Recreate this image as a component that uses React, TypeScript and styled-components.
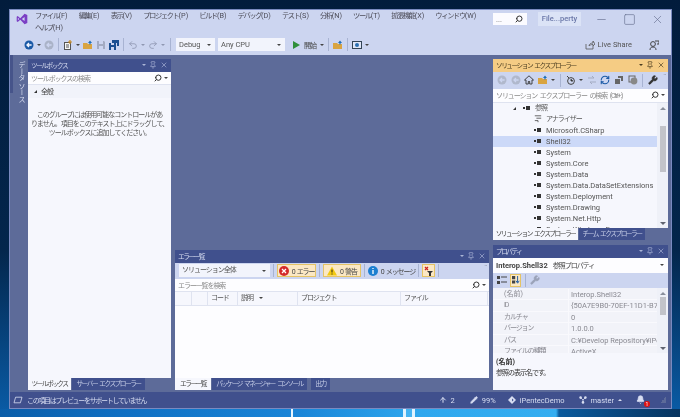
import React from 'react'
import styled, { createGlobalStyle, css } from 'styled-components'
import { ArrowUp, Bell, Minus, Pencil, Pin, Redo2, RefreshCw, Search, Square, Undo2, Wrench, X } from 'lucide-react'

const GlobalStyle = createGlobalStyle`
  html, body { margin: 0; padding: 0; }
  body { font-family: Roboto, "Noto Sans CJK JP", sans-serif; font-size: 7.5px; color: #444; }
  * { box-sizing: border-box; }
`

// the reference's Japanese UI font is much narrower than Noto CJK
const jpNarrow = css`
  font-size: 6.7px;
  letter-spacing: -1.5px;
  word-spacing: 2px;
`

const jpText = css`
  font-size: 7px;
  letter-spacing: -1px;
  word-spacing: 1.5px;
`

const Desktop = styled.div`
  width: 680px;
  height: 417px;
  overflow: hidden;
  padding: 9px 8px 8px 9px;
  background-image:
    linear-gradient(90deg, transparent 0 291px, #e8f6ff 291px 293px, transparent 293px 403px, #dff3ff 403px 406px, #45b4f2 406px 412px, #dff3ff 412px 415px, transparent 415px),
    linear-gradient(90deg, #0a5da8 0, #0f6fc2 120px, #1a86d8 300px, #2fa8ee 420px, #35aef0 556px, #0a5a9c 559px, #07345f 680px),
    linear-gradient(180deg, #021c3c 0, #03264c 60%, #0a5da8 100%);
  background-size: 100% 8px, 100% 8px, 100% 100%;
  background-position: bottom, bottom, top;
  background-repeat: no-repeat;
`

const Window = styled.div`
  width: 663px;
  height: 400px;
  display: flex;
  flex-direction: column;
  background: #5d6b99;
  border: 1px solid #7a8ac0;
  filter: blur(0.25px);
`

const Head = styled.header`
  height: 45px;
  background: #ccd5f0;
  display: flex;
  flex-direction: column;
  flex: none;
`

const TopRow = styled.div`
  height: 26px;
  display: flex;
  align-items: flex-start;
`

const Logo = styled.svg`
  width: 12px;
  height: 12px;
  margin: 3px 7px 0 6px;
  flex: none;
`

const Menu = styled.nav`
  font-size: 7.3px;
  letter-spacing: -1.4px;
  width: 454px;
  display: flex;
  flex-wrap: wrap;
  column-gap: 11px;
  row-gap: 1px;
  padding-top: 1px;
  line-height: 10.5px;
  color: #4c4c58;
`

const MenuKey = styled.span`
  letter-spacing: 0;
`

const QuickSearch = styled.div`
  width: 34px;
  height: 12px;
  margin: 3px 0 0 4px;
  background: #fbfbff;
  display: flex;
  align-items: center;
  justify-content: space-between;
  padding: 0 4px 0 3px;
  color: #777;
`

const SolutionName = styled.div`
  width: 43px;
  height: 14px;
  margin: 2px 0 0 11px;
  background: #dbe3f6;
  color: #6a77a8;
  font-weight: 500;
  text-align: center;
  line-height: 14px;
  white-space: nowrap;
`

const WindowButtons = styled.div`
  margin: 3px 0 0 14px;
  display: flex;
  gap: 15px;
  color: #66708f;
  svg { width: 13px; height: 13px; stroke-width: 1.2; display: block; }
`

const MainBar = styled.div`
  height: 17px;
  padding-left: 6px;
  display: flex;
  align-items: center;
  gap: 3px;
`

const Grip = styled.div`
  width: 4px;
  height: 11px;
  margin-right: 1px;
  background-image: radial-gradient(#8a93ad 0.6px, transparent 0.7px);
  background-size: 2px 2px;
`

const Sep = styled.div<{ $m?: number }>`
  width: 1px;
  height: 13px;
  margin: 0 ${(p) => p.$m ?? 1}px;
  background: #a8b3d2;
  flex: none;
`

const Caret = styled.span<{ $c?: string }>`
  display: inline-block;
  flex: none;
  width: 0;
  height: 0;
  border-left: 2px solid transparent;
  border-right: 2px solid transparent;
  border-top: 2px solid ${(p) => p.$c || '#444'};
`

const Combo = styled.div<{ $w: number; $jp?: boolean }>`
  ${(p) => p.$jp && jpText}
  width: ${(p) => p.$w}px;
  height: 13px;
  flex: none;
  padding: 0 4px 0 3px;
  background: #f2f4fc;
  display: flex;
  align-items: center;
  justify-content: space-between;
  color: #555;
  line-height: 13px;
`

const IconSvg = styled.svg`
  width: 10px;
  height: 10px;
  flex: none;
  display: block;
`

const Spring = styled.div`
  flex: 1;
`

const StartLabel = styled.span`
  ${jpText}
  width: 13px;
  white-space: nowrap;
`

const PlayIcon = styled(IconSvg)`
  margin-left: 3px;
`

const LiveShare = styled.div`
  display: flex;
  align-items: center;
  gap: 3px;
  margin-right: 14px;
  color: #555;
  svg { width: 10px; height: 10px; }
`

const PersonIcon = styled(IconSvg)`
  margin-right: 12px;
`

const Body = styled.main`
  flex: 1;
  min-height: 0;
  display: flex;
  padding: 4px 3px 0 0;
`

const SideTab = styled.div`
  ${jpText}
  letter-spacing: -0.6px;
  width: 18px;
  height: 38px;
  flex: none;
  margin-top: -4px;
  padding-top: 6px;
  border-left: 3px solid #46548a;
  color: #d6dcf0;
  writing-mode: vertical-rl;
  line-height: 14px;
  white-space: nowrap;
`

const ToolboxColumn = styled.section`
  width: 143px;
  flex: none;
  display: flex;
  flex-direction: column;
  padding-bottom: 1px;
`

const Center = styled.section`
  width: 314px;
  flex: none;
  margin: 0 4px;
  display: flex;
  flex-direction: column;
  justify-content: flex-end;
  padding-bottom: 1px;
`

const RightColumn = styled.section`
  width: 175px;
  flex: none;
  display: flex;
  flex-direction: column;
  gap: 5px;
  padding-bottom: 1px;
`

const PanelHead = styled.div<{ $active?: boolean }>`
  ${jpNarrow}
  height: 12.5px;
  flex: none;
  padding: 0 3px 0 3px;
  display: flex;
  align-items: center;
  justify-content: space-between;
  background: ${(p) => (p.$active ? '#f5cc84' : '#40508d')};
  color: ${(p) => (p.$active ? '#4a3c20' : '#d8def2')};
`

const HeadTools = styled.div<{ $active?: boolean }>`
  display: flex;
  align-items: center;
  gap: 3px;
  color: ${(p) => (p.$active ? '#4a3c20' : '#aab4d6')};
  svg { width: 8px; height: 8px; }
`

const Bar = styled.div<{ $h: number; $gap?: number }>`
  height: ${(p) => p.$h}px;
  flex: none;
  background: #ccd5f0;
  display: flex;
  align-items: center;
  gap: ${(p) => p.$gap ?? 3}px;
  padding: 0 4px;
  position: relative;
`

const Overflow = styled.span`
  position: absolute;
  top: 1px;
  right: 2px;
  color: #555;
  font-size: 6px;
  line-height: 6px;
`

const SearchBox = styled.div<{ $h: number }>`
  ${jpText}
  letter-spacing: -1.1px;
  word-spacing: 2px;
  height: ${(p) => p.$h}px;
  flex: none;
  padding: 0 3px;
  background: #fdfdff;
  border-bottom: 1px solid #dfe3f0;
  display: flex;
  align-items: center;
  justify-content: space-between;
  color: #8a8a8a;
  white-space: nowrap;
`

const SearchEnd = styled.div`
  display: flex;
  align-items: center;
  gap: 2px;
  svg { width: 8px; height: 8px; color: #333; transform: scaleX(-1); stroke-width: 3; }
`

const QuickSearchIcon = styled(Search)`
  width: 8px;
  height: 8px;
  color: #333;
  stroke-width: 3;
  transform: scaleX(-1);
`

const ToolboxBody = styled.div`
  flex: 1;
  background: #f6f7fd;
  color: #555;
`

const GroupRow = styled.div`
  ${jpText}
  height: 13px;
  padding-left: 6px;
  display: flex;
  align-items: center;
  gap: 4px;
  background: #f1f3fa;
  color: #444;
`

const Expander = styled.span`
  display: inline-block;
  width: 0;
  height: 0;
  flex: none;
  border-left: 3px solid transparent;
  border-bottom: 3px solid #333;
`

const TreeExpander = styled(Expander)`
  margin-right: 3px;
`

const EmptyNote = styled.p`
  ${jpText}
  margin: 13px 0 0;
  text-align: center;
  line-height: 9.2px;
  white-space: nowrap;
`

const TabStrip = styled.div`
  height: 12.5px;
  flex: none;
  display: flex;
  gap: 1px;
`

const Tab = styled.div<{ $active?: boolean; $w: number; $ml?: number }>`
  ${jpNarrow}
  width: ${(p) => p.$w}px;
  margin-left: ${(p) => p.$ml || 0}px;
  flex: none;
  text-align: center;
  line-height: 12px;
  white-space: nowrap;
  background: ${(p) => (p.$active ? '#f6f7fd' : '#40508d')};
  color: ${(p) => (p.$active ? '#444' : '#c6cee8')};
`

const ErrorPanel = styled.div`
  height: 140px;
  flex: none;
  display: flex;
  flex-direction: column;
`

const FilterButton = styled.div<{ $on?: boolean; $w: number }>`
  ${jpText}
  letter-spacing: -1.1px;
  width: ${(p) => p.$w}px;
  height: 13px;
  flex: none;
  display: flex;
  align-items: center;
  justify-content: center;
  gap: 3px;
  color: #444;
  white-space: nowrap;
  background: ${(p) => (p.$on ? '#fbe8c4' : 'transparent')};
  border: 1px solid ${(p) => (p.$on ? '#e5c365' : 'transparent')};
`

const Columns = styled.div`
  height: 14px;
  flex: none;
  display: flex;
  background: #f6f7fd;
  border-bottom: 1px solid #dfe3f0;
`

const Col = styled.div<{ $w: number }>`
  ${jpText}
  letter-spacing: -1.1px;
  width: ${(p) => p.$w}px;
  flex: none;
  padding-left: 3px;
  border-right: 1px solid #dfe3f0;
  line-height: 14px;
  color: #555;
  display: flex;
  align-items: center;
  gap: 6px;
`

const ErrorBody = styled.div`
  flex: 1;
  background: #fdfdff;
`

const ExplorerPanel = styled.div`
  height: 181px;
  flex: none;
  display: flex;
  flex-direction: column;
`

const TreeArea = styled.div`
  height: 125px;
  flex: none;
  display: flex;
  background: #f6f7fd;
  overflow: hidden;
`

const TreeList = styled.div`
  flex: 1;
`

const TreeRow = styled.div<{ $sel?: boolean; $indent: number }>`
  height: 11px;
  padding-left: ${(p) => p.$indent}px;
  display: flex;
  align-items: center;
  gap: 4px;
  white-space: nowrap;
  line-height: 11px;
  color: #555;
  background: ${(p) => (p.$sel ? '#ccd9f8' : 'transparent')};
`

const TreeJp = styled.span`
  ${jpText}
`

const RefGlyph = styled.span`
  width: 8px;
  height: 5px;
  flex: none;
  display: flex;
  align-items: center;
  gap: 1px;
  &::before { content: ''; width: 2px; height: 2px; background: #333; }
  &::after { content: ''; width: 4px; height: 4px; background: #333; }
`

const AnalyzerIcon = styled(IconSvg)`
  width: 8px;
  height: 8px;
`

const Track = styled.div`
  width: 11px;
  flex: none;
  background: #eff1f8;
  display: flex;
  flex-direction: column;
  align-items: center;
`

const Thumb = styled.div<{ $top: number; $h: number }>`
  width: 6px;
  height: ${(p) => p.$h}px;
  margin-top: ${(p) => p.$top}px;
  background: #c2c3c9;
  flex: none;
`

const ArrowUpMark = styled.span`
  margin-top: 4px;
  width: 0;
  height: 0;
  flex: none;
  border-left: 3px solid transparent;
  border-right: 3px solid transparent;
  border-bottom: 3px solid #8a8f9c;
`

const ArrowDownMark = styled(ArrowUpMark)`
  margin: auto 0 3px;
  border-bottom: 0;
  border-top: 3px solid #606470;
`

const PropsPanel = styled.div`
  flex: 1;
  display: flex;
  flex-direction: column;
  min-height: 0;
`

const ObjectCombo = styled.div`
  height: 15px;
  flex: none;
  padding: 0 4px 0 3px;
  background: #fdfdff;
  display: flex;
  align-items: center;
  justify-content: space-between;
  color: #444;
  white-space: pre;
  b { font-size: 7.5px; font-weight: 700; }
  em { ${jpText} font-style: normal; margin-left: 5px; }
`

const PropGrid = styled.div`
  height: 65px;
  flex: none;
  display: flex;
  background: #f2f3f9;
  overflow: hidden;
`

const PropRows = styled.div`
  flex: 1;
  min-width: 0;
  padding-top: 1px;
`

const PropRow = styled.div<{ $plain?: boolean }>`
  height: 11.6px;
  display: grid;
  grid-template-columns: 66px 1fr;
  padding-left: 9px;
  border-bottom: 1px solid #f9f9fd;
  line-height: 11px;
  color: #8a8a92;
  span { padding-left: 2px; white-space: nowrap; overflow: hidden; }
  span:first-child { ${jpText} letter-spacing: ${(p) => (p.$plain ? 0 : -1.1)}px; }
  span + span { border-left: 1px solid #f9f9fd; }
`

const Description = styled.div`
  ${jpText}
  flex: 1;
  background: #f6f7fd;
  padding: 4px 3px;
  line-height: 11px;
  color: #333;
  b { display: block; font-weight: 700; letter-spacing: 0; }
`

const StatusBar = styled.footer`
  height: 16px;
  flex: none;
  margin-top: 1px;
  background: #40508d;
  color: #d8def2;
  display: flex;
  align-items: center;
  padding: 0 5px 0 3px;
  position: relative;
`

const StatusIcon = styled(IconSvg)`
  width: 10px;
  height: 8px;
  margin-right: 4px;
`

const StatusText = styled.span`
  ${jpText}
  letter-spacing: -1.3px;
`

const StatusItem = styled.div<{ $ml?: number }>`
  display: flex;
  align-items: center;
  gap: 4px;
  margin-left: ${(p) => p.$ml || 0}px;
  svg { width: 8px; height: 8px; flex: none; }
`

const UpCaret = styled(Caret)`
  transform: rotate(180deg);
`

const BellWrap = styled.div`
  position: relative;
  margin-left: 14px;
  color: #d8def2;
  width: 10px;
  height: 10px;
  svg { width: 9px; height: 9px; display: block; }
`

const Badge = styled.span`
  position: absolute;
  right: -4px;
  bottom: -2px;
  width: 6px;
  height: 6px;
  border-radius: 50%;
  background: #e01010;
  color: #fff;
  font-size: 5px;
  line-height: 6px;
  text-align: center;
`

const ResizeGrip = styled.div`
  width: 6px;
  height: 6px;
  margin-left: 14px;
  background: linear-gradient(135deg, transparent 50%, #5d6b99 50%);
`

const MENU = ['ファイル(F)', '編集(E)', '表示(V)', 'プロジェクト(P)', 'ビルド(B)', 'デバッグ(D)', 'テスト(S)', '分析(N)', 'ツール(T)', '拡張機能(X)', 'ウィンドウ(W)', 'ヘルプ(H)']

const TREE = ['Microsoft.CSharp', 'Shell32', 'System', 'System.Core', 'System.Data', 'System.Data.DataSetExtensions', 'System.Deployment', 'System.Drawing', 'System.Net.Http', 'System.Windows.Forms']

const PROPS = [
  ['(名前)', 'Interop.Shell32'],
  ['ID', '{50A7E9B0-70EF-11D1-B75A'],
  ['カルチャ', '0'],
  ['バージョン', '1.0.0.0'],
  ['パス', 'C:¥Develop Repository¥iPe'],
  ['ファイルの種類', 'ActiveX'],
]

const CircleArrow = ({ color, fill }: { color: string; fill: string }) => (
  <IconSvg viewBox="0 0 10 10">
    <circle cx="5" cy="5" r="4.5" fill={color} />
    <path d="M7.6 5H3.2M5 3 3 5l2 2" stroke={fill} strokeWidth="1.3" fill="none" />
  </IconSvg>
)

const Folder = () => (
  <IconSvg viewBox="0 0 10 10">
    <path d="M0 3h4l1 1h4v5H0z" fill="#d9a441" />
    <path d="M5 3 7 .5 9 3H7.6v1.4H6.4V3z" fill="#1e6fb8" />
  </IconSvg>
)

const Disk = ({ color }: { color: string }) => (
  <IconSvg viewBox="0 0 10 10">
    <path d="M1 1h7l1 1v7H1z" fill={color} />
    <path d="M3 1h4v3H3zM3 6h4v3H3z" fill="#ccd5f0" />
  </IconSvg>
)

const SaveAll = () => (
  <IconSvg viewBox="0 0 10 10">
    <path d="M3 0h7v6H8V3H3z" fill="#1b4f91" />
    <path d="M0 3h7v7H0z" fill="#1b4f91" />
    <path d="M2 3h3v2H2zM2 7h3v3H2z" fill="#ccd5f0" />
  </IconSvg>
)

const NewProject = () => (
  <IconSvg viewBox="0 0 10 10">
    <rect x="1.5" y="2.5" width="6" height="7" fill="#f7f7f7" stroke="#555" />
    <path d="M7 0v4M5 2h4" stroke="#c78a22" strokeWidth="1.2" />
    <path d="M3 5h3M3 7h3" stroke="#555" />
  </IconSvg>
)

const Search16 = () => (
  <SearchEnd>
    <Search />
    <Caret $c="#444" />
  </SearchEnd>
)

const PaneTools = ({ active }: { active?: boolean }) => (
  <HeadTools $active={active}>
    <Caret $c={active ? '#4a3c20' : '#aab4d6'} />
    <Pin />
    <X />
  </HeadTools>
)

const ScrollBar = ({ top, h }: { top: number; h: number }) => (
  <Track>
    <ArrowUpMark />
    <Thumb $top={top} $h={h} />
    <ArrowDownMark />
  </Track>
)

const App = () => {
  return (
    <Desktop>
      <GlobalStyle />
      <Window>
        <Head>
          <TopRow>
            <Logo viewBox="0 0 14 14">
              <path d="M10 1 5 6 2 3.6 0.8 4.3v5.4L2 10.4 5 8l5 5 3.2-1.4V2.4zM10 4.6v4.8L6.8 7zM2.2 5.6 3.8 7 2.2 8.4z" fill="#7b3fc4" />
            </Logo>
            <Menu>
              {MENU.map((m) => (
                <span key={m}>
                  {m.slice(0, -3)}
                  <MenuKey>{m.slice(-3)}</MenuKey>
                </span>
              ))}
            </Menu>
            <QuickSearch>
              ...
              <QuickSearchIcon />
            </QuickSearch>
            <SolutionName>File...perty</SolutionName>
            <WindowButtons>
              <Minus />
              <Square />
              <X />
            </WindowButtons>
          </TopRow>
          <MainBar>
            <Grip />
            <CircleArrow color="#1b5aa6" fill="#f5f7ff" />
            <Caret />
            <CircleArrow color="#aab3c8" fill="#ccd5f0" />
            <Sep />
            <NewProject />
            <Caret />
            <Folder />
            <Disk color="#a3abc2" />
            <SaveAll />
            <Sep />
            <Undo2 size={10} color="#8f98b2" />
            <Caret $c="#8f98b2" />
            <Redo2 size={10} color="#8f98b2" />
            <Caret $c="#8f98b2" />
            <Sep $m={2} />
            <Combo $w={39}>
              Debug
              <Caret />
            </Combo>
            <Combo $w={67}>
              Any CPU
              <Caret />
            </Combo>
            <PlayIcon viewBox="0 0 10 10">
              <path d="M2 1v8l7-4z" fill="#2f8f3a" />
            </PlayIcon>
            <StartLabel>開始</StartLabel>
            <Caret />
            <Sep />
            <Folder />
            <Sep />
            <IconSvg viewBox="0 0 10 10">
              <rect x="0.5" y="1.5" width="9" height="7" fill="#dfe6f7" stroke="#345" />
              <circle cx="5" cy="5" r="2" fill="#2a6fb0" />
            </IconSvg>
            <Caret />
            <Spring />
            <LiveShare>
              <IconSvg viewBox="0 0 10 10">
                <path d="M1 4v5h7V6M4 6c0-2 2-3 4-3V1l2 3-2 2V4.5C6 4.500 5 5 4 6z" fill="none" stroke="#555" strokeWidth="0.8" />
              </IconSvg>
              Live Share
            </LiveShare>
            <PersonIcon viewBox="0 0 10 10">
              <circle cx="4" cy="4" r="2.400" fill="none" stroke="#444" />
              <path d="M1 10c0-2 1-3 3-3s3 1 3 3M6 1h4v3H8" fill="none" stroke="#444" />
            </PersonIcon>
          </MainBar>
        </Head>
        <Body>
          <SideTab>データ ソース</SideTab>
          <ToolboxColumn>
            <PanelHead>
              ツールボックス
              <PaneTools />
            </PanelHead>
            <SearchBox $h={13}>
              ツールボックスの検索
              <Search16 />
            </SearchBox>
            <ToolboxBody>
              <GroupRow>
                <Expander />
                全般
              </GroupRow>
              <EmptyNote>
                このグループには使用可能なコントロールがあ
                <br />
                りません。項目をこのテキスト上にドラッグして、
                <br />
                ツールボックスに追加してください。
              </EmptyNote>
            </ToolboxBody>
            <TabStrip>
              <Tab $active $w={43}>
                ツールボックス
              </Tab>
              <Tab $w={73}>サーバー エクスプローラー</Tab>
            </TabStrip>
          </ToolboxColumn>
          <Center>
            <ErrorPanel>
              <PanelHead>
                エラー一覧
                <PaneTools />
              </PanelHead>
              <Bar $h={16} $gap={2}>
                <Combo $w={91} $jp>
                  ソリューション全体
                  <Caret />
                </Combo>
                <Sep />
                <FilterButton $on $w={39}>
                  <IconSvg viewBox="0 0 10 10">
                    <circle cx="5" cy="5" r="5" fill="#d42a2a" />
                    <path d="M3 3l4 4M7 3 3 7" stroke="#fff" strokeWidth="1.3" />
                  </IconSvg>
                  0 エラー
                </FilterButton>
                <Sep />
                <FilterButton $on $w={38}>
                  <IconSvg viewBox="0 0 10 10">
                    <path d="M5 .5 10 9.500H0z" fill="#f2c811" />
                    <path d="M5 3.500v3M5 7.500v1" stroke="#222" />
                  </IconSvg>
                  0 警告
                </FilterButton>
                <Sep />
                <FilterButton $w={47}>
                  <IconSvg viewBox="0 0 10 10">
                    <circle cx="5" cy="5" r="5" fill="#1c7fd0" />
                    <path d="M5 4v4M5 2v1" stroke="#fff" strokeWidth="1.300" />
                  </IconSvg>
                  0 メッセージ
                </FilterButton>
                <Sep />
                <FilterButton $on $w={13}>
                  <IconSvg viewBox="0 0 10 10">
                    <path d="M1 1l3 3M4 1 1 4" stroke="#c22" strokeWidth="1.2" />
                    <path d="M3 5h6L7 7v3H5V7z" fill="#333" />
                  </IconSvg>
                </FilterButton>
                <Sep />
                <Overflow>¨</Overflow>
              </Bar>
              <SearchBox $h={13}>
                エラー一覧を検索
                <Search16 />
              </SearchBox>
              <Columns>
                <Col $w={17} />
                <Col $w={16} />
                <Col $w={30}>コード</Col>
                <Col $w={60}>
                  説明
                  <Caret />
                </Col>
                <Col $w={103}>プロジェクト</Col>
                <Col $w={87}>ファイル</Col>
              </Columns>
              <ErrorBody />
              <TabStrip>
                <Tab $active $w={36}>
                  エラー一覧
                </Tab>
                <Tab $w={95}>パッケージ マネージャー コンソール</Tab>
                <Tab $w={19} $ml={3}>
                  出力
                </Tab>
              </TabStrip>
            </ErrorPanel>
          </Center>
          <RightColumn>
            <ExplorerPanel>
              <PanelHead $active>
                ソリューション エクスプローラー
                <PaneTools active />
              </PanelHead>
              <Bar $h={17} $gap={3.6}>
                <CircleArrow color="#b0b8cc" fill="#ccd5f0" />
                <CircleArrow color="#b0b8cc" fill="#ccd5f0" />
                <IconSvg viewBox="0 0 10 10">
                  <path d="M5 .8 .5 5H2v4h2.300V6.500h1.400V9H8V5h1.500z" fill="none" stroke="#333" strokeWidth="0.9" />
                </IconSvg>
                <Folder />
                <Caret />
                <Sep />
                <IconSvg viewBox="0 0 10 10">
                  <circle cx="5" cy="6" r="3.400" fill="none" stroke="#444" />
                  <path d="M5 4v2h2M1 1l2 2" stroke="#444" />
                </IconSvg>
                <Caret />
                <IconSvg viewBox="0 0 10 10">
                  <path d="M1 3h6M5 1l2 2M9 7H3M5 9 3 7" stroke="#a3abc2" fill="none" />
                </IconSvg>
                <RefreshCw size={10} color="#1b5aa6" strokeWidth={2.600} />
                <IconSvg viewBox="0 0 10 10">
                  <path d="M4 1h5v5H7V3H4zM1 4h5v5H1z" fill="#666" />
                </IconSvg>
                <IconSvg viewBox="0 0 10 10">
                  <rect x="1" y="1" width="6" height="6" fill="none" stroke="#666" />
                  <circle cx="6" cy="6" r="3.400" fill="#888" />
                </IconSvg>
                <Sep />
                <Wrench size={10} color="#333" fill="#333" />
                <Overflow>¨</Overflow>
              </Bar>
              <SearchBox $h={14}>
                ソリューション エクスプローラー の検索 (Ctrl+:)
                <Search16 />
              </SearchBox>
              <TreeArea>
                <TreeList>
                  <TreeRow $indent={20}>
                    <TreeExpander />
                    <RefGlyph />
                    <TreeJp>参照</TreeJp>
                  </TreeRow>
                  <TreeRow $indent={41}>
                    <AnalyzerIcon viewBox="0 0 10 10">
                      <path d="M1 1h8M3 4h6M1 7h4v2" stroke="#444" fill="none" />
                    </AnalyzerIcon>
                    <TreeJp>アナライザー</TreeJp>
                  </TreeRow>
                  {TREE.map((t) => (
                    <TreeRow key={t} $indent={41} $sel={t === 'Shell32'}>
                      <RefGlyph />
                      {t}
                    </TreeRow>
                  ))}
                </TreeList>
                <ScrollBar top={16} h={46} />
              </TreeArea>
              <TabStrip>
                <Tab $active $w={85}>
                  ソリューション エクスプローラー
                </Tab>
                <Tab $w={66}>チーム エクスプローラー</Tab>
              </TabStrip>
            </ExplorerPanel>
            <PropsPanel>
              <PanelHead>
                プロパティ
                <PaneTools />
              </PanelHead>
              <ObjectCombo>
                <span>
                  <b>Interop.Shell32</b>
                  <em>参照プロパティ</em>
                </span>
                <Caret />
              </ObjectCombo>
              <Bar $h={15}>
                <IconSvg viewBox="0 0 10 10">
                  <path d="M0 1h3v3H0zM0 6h3v3H0z" fill="#444" />
                  <path d="M4 2h6M4 7h6" stroke="#444" />
                </IconSvg>
                <FilterButton $on $w={11}>
                  <AnalyzerIcon viewBox="0 0 10 10">
                    <path d="M0 0h4v4H0zM0 5.500h4v4H0z" fill="#444" />
                    <path d="M7 0v8M5 6l2 3 2-3" stroke="#1b5aa6" fill="none" strokeWidth="1.200" />
                  </AnalyzerIcon>
                </FilterButton>
                <Sep />
                <Wrench size={10} color="#9aa2b8" fill="#9aa2b8" />
              </Bar>
              <PropGrid>
                <PropRows>
                  {PROPS.map(([k, v]) => (
                    <PropRow key={k} $plain={k === '(名前)'}>
                      <span>{k}</span>
                      <span>{v}</span>
                    </PropRow>
                  ))}
                </PropRows>
                <ScrollBar top={2} h={18} />
              </PropGrid>
              <Description>
                <b>(名前)</b>
                参照の表示名です。
              </Description>
            </PropsPanel>
          </RightColumn>
        </Body>
        <StatusBar>
          <StatusIcon viewBox="0 0 10 10">
            <path d="M2 1.500h8L8 8.500H0z" fill="none" stroke="#d8def2" />
          </StatusIcon>
          <StatusText>この項目はプレビューをサポートしていません</StatusText>
          <Spring />
          <StatusItem>
            <ArrowUp strokeWidth={3} />2
          </StatusItem>
          <StatusItem $ml={15}>
            <Pencil fill="#d8def2" />
            99%
          </StatusItem>
          <StatusItem $ml={12}>
            <IconSvg viewBox="0 0 10 10">
              <path d="M5 0l5 5-5 5-5-5z" fill="#d8def2" />
              <path d="M5 3l2 2-2 2z" fill="#40508d" />
            </IconSvg>
            iPentecDemo
          </StatusItem>
          <StatusItem $ml={14}>
            <IconSvg viewBox="0 0 10 10">
              <circle cx="2" cy="2" r="1.600" fill="#d8def2" />
              <circle cx="8" cy="2" r="1.600" fill="#d8def2" />
              <circle cx="5" cy="8" r="1.600" fill="#d8def2" />
              <path d="M2 2l3 3 3-3M5 5v3" stroke="#d8def2" fill="none" />
            </IconSvg>
            master
            <UpCaret $c="#d8def2" />
          </StatusItem>
          <BellWrap>
            <Bell fill="#d8def2" />
            <Badge>1</Badge>
          </BellWrap>
          <ResizeGrip />
        </StatusBar>
      </Window>
    </Desktop>
  )
}

export default App
